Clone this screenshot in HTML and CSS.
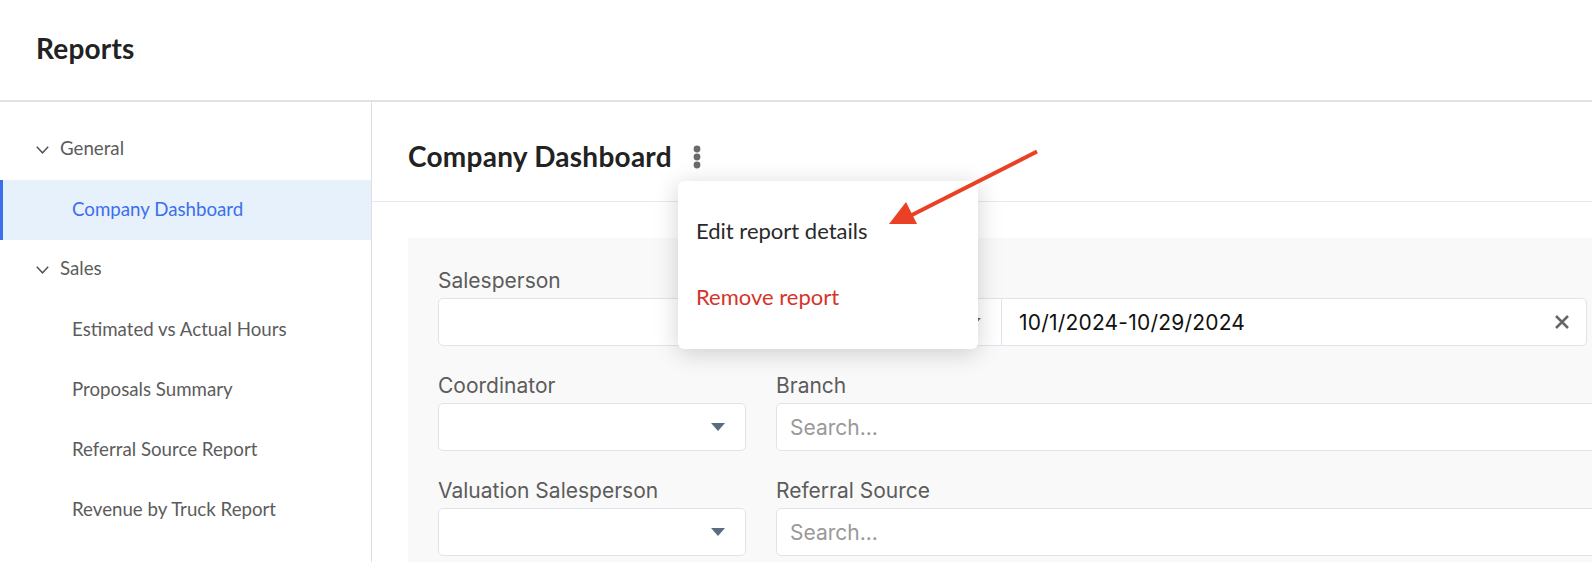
FILE: index.html
```html
<!DOCTYPE html>
<html lang="en">
<head>
<meta charset="utf-8">
<title>Reports</title>
<link rel="stylesheet" href="styles.css">
</head>
<body>
<header class="topbar"><h1 class="page-title">Reports</h1></header>
<div class="layout">
  <nav class="sidebar">
    <div class="group"><svg class="chev" viewBox="0 0 13 8"><path d="M.8.8l5.700 6 5.700-6"/></svg>General</div>
    <a class="item active">Company Dashboard</a>
    <div class="group"><svg class="chev" viewBox="0 0 13 8"><path d="M.8.8l5.700 6 5.700-6"/></svg>Sales</div>
    <a class="item">Estimated vs Actual Hours</a>
    <a class="item">Proposals Summary</a>
    <a class="item">Referral Source Report</a>
    <a class="item">Revenue by Truck Report</a>
    <a class="item">Sales</a>
  </nav>
  <main class="content">
    <div class="content-head">
      <h2 class="report-title">Company Dashboard</h2>
      <svg class="kebab" viewBox="0 0 8 24"><circle cx="4" cy="4" r="3.4"/><circle cx="4" cy="12" r="3.4"/><circle cx="4" cy="20" r="3.4"/></svg>
    </div>
    <section class="filters">
      <div class="row">
        <div class="field narrow"><label>Salesperson</label><div class="box select"></div></div>
        <div class="field date-range">
          <label>&nbsp;</label>
          <div class="joined">
            <div class="box select preset"><span class="caret"></span></div>
            <div class="box date"><span>10/1/2024-10/29/2024</span><svg class="clear" viewBox="0 0 16 16"><path d="M2 2l12 12M14 2L2 14"/></svg></div>
          </div>
        </div>
      </div>
      <div class="row">
        <div class="field narrow"><label>Coordinator</label><div class="box select"><span class="caret"></span></div></div>
        <div class="field wide"><label>Branch</label><div class="box search">Search...</div></div>
      </div>
      <div class="row">
        <div class="field narrow"><label>Valuation Salesperson</label><div class="box select"><span class="caret"></span></div></div>
        <div class="field wide"><label>Referral Source</label><div class="box search">Search...</div></div>
      </div>
    </section>
  </main>
</div>
<div class="menu">
  <div class="menu-item">Edit report details</div>
  <div class="menu-item danger">Remove report</div>
</div>
<svg class="annotation" viewBox="0 0 1592 562"><path d="M1037 151.500L905 218.500" /><polygon points="889,224 906,202 917,224"/></svg>
</body>
</html>
```
FILE: styles.css
```css
* { box-sizing: border-box; }
html, body { margin: 0; height: 562px; overflow: hidden; background: #fff; }
body { font-family: "Lato", "Noto Sans", sans-serif; color: #222; position: relative; }
.topbar { height: 102px; border-bottom: 2px solid #e2e2e2; display: flex; align-items: center; padding: 0 0 4px 36px; }
.page-title { margin: 0; font-size: 28px; font-weight: 700; color: #222; letter-spacing: .2px; }
.layout { display: flex; height: 460px; overflow: hidden; }
.sidebar { width: 372px; flex: none; border-right: 1.500px solid #dedede; padding-top: 18px; }
.group { height: 60px; display: flex; align-items: center; gap: 11px; padding: 0 0 4px 36px; font-size: 18.700px; color: #5c5c5c; }
.chev { width: 13px; height: 8px; fill: none; stroke: #555; stroke-width: 1.500; margin-top: 4px; }
.item { display: flex; align-items: center; height: 60px; padding: 0 0 3px 72px; font-size: 18.700px; color: #5c5c5c; }
.item.active { background: #e6f1fc; color: #3c6fec; border-left: 3px solid #3c6fec; padding-left: 69px; }
.content { flex: 1; min-width: 0; }
.content-head { height: 100px; border-bottom: 1.500px solid #e6e8ef; display: flex; align-items: center; padding: 10px 0 0 36px; gap: 21px; }
.report-title { margin: 0 0 2px; font-size: 28px; font-weight: 700; color: #222; letter-spacing: .25px; }
.kebab { width: 8px; height: 24px; fill: #6b6b6b; }
.filters { margin: 36px 0 0 36px; background: #f9f9f9; padding: 30px 0 0 30px; width: 1400px; height: 400px; display: flex; flex-direction: column; gap: 27px; }
.row { display: flex; gap: 30px; }
.field { display: flex; flex-direction: column; }
.field label { font-family: "Inter", sans-serif; font-size: 21px; line-height: 26px; height: 30px; color: #5c5c5c; }
.narrow { width: 308px; flex: none; }
.wide { width: 900px; flex: none; }
.box { height: 48px; background: #fff; border: 1.500px solid #dfe3ee; border-radius: 5px; display: flex; align-items: center; position: relative; }
.select { justify-content: flex-end; padding-right: 20px; }
.caret { width: 0; height: 0; border-left: 7px solid transparent; border-right: 7px solid transparent; border-top: 8px solid #5b6b80; }
.search { padding-left: 13px; font-family: "Inter", sans-serif; font-size: 21px; color: #999; }
.joined { display: flex; }
.preset { width: 225px; border-radius: 5px 0 0 5px; border-right: 0; }
.date { width: 586px; padding: 0 16px 0 17px; justify-content: space-between; font-family: "Inter", sans-serif; font-size: 21px; letter-spacing: .2px; color: #111; border-radius: 0 5px 5px 0; }
.clear { width: 16px; height: 16px; fill: none; stroke: #666; stroke-width: 2.500; }
.menu { position: absolute; left: 678px; top: 181px; width: 300px; height: 168px; background: #fff; border-radius: 6px; box-shadow: 0 4px 24px rgba(0,0,0,.18); padding-top: 16px; }
.menu-item { height: 66px; display: flex; align-items: center; padding-left: 18px; font-size: 22px; color: #2a2a2a; }
.menu-item.danger { color: #d5342b; }
.annotation { position: absolute; left: 0; top: 0; width: 1592px; height: 562px; pointer-events: none; }
.annotation path { stroke: #ea4025; stroke-width: 4; fill: none; }
.annotation polygon { fill: #ea4025; }
```
